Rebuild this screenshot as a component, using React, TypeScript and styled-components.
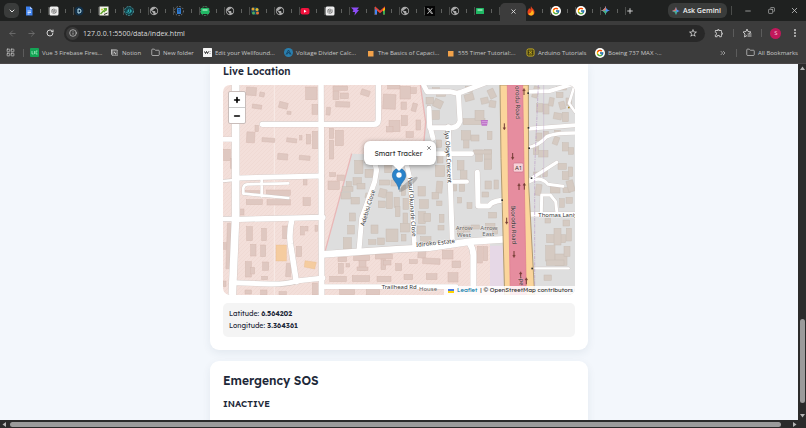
import React from "react";
import styled, { createGlobalStyle, css } from "styled-components";
import { FcGoogle } from "react-icons/fc";
import { MdPublic, MdStarBorder, MdOutlineExtension } from "react-icons/md";
import { AiOutlineOpenAI } from "react-icons/ai";
import { FaXTwitter } from "react-icons/fa6";
import { RiNotionFill } from "react-icons/ri";
import {
  ArrowLeft,
  ArrowRight,
  ChevronDown,
  ChevronsRight,
  Copy,
  EllipsisVertical,
  Folder,
  Info,
  LayoutGrid,
  Minus,
  Plus,
  RotateCw,
  X,
} from "lucide-react";

const chromeFont = `"Open Sans", "Noto Sans", sans-serif`;
const pageFont = `Lexend, Inter, "Open Sans", sans-serif`;

const GlobalStyle = createGlobalStyle`
  * { box-sizing: border-box; }
  body { margin: 0; overflow: hidden; background: #f3f7fc; font-family: ${pageFont}; }
  button { border: 0; padding: 0; background: none; color: inherit; font: inherit; }
  a { color: inherit; text-decoration: none; }
  h2, p { margin: 0; }
  svg { display: block; flex: none; }
`;

const Browser = styled.div`
  display: flex;
  flex-direction: column;
  height: 100vh;
  background: #3c3c3c;
  color: #c7c7c7;
  font-family: ${chromeFont};
`;

const center = css`
  display: flex;
  align-items: center;
  justify-content: center;
`;

const TabStrip = styled.div`
  display: flex;
  align-items: center;
  height: 21px;
  flex: none;
  background: #1f2120;
`;

const TabSearch = styled.button`
  ${center}
  width: 15px;
  height: 15px;
  margin: 0 5px 0 4px;
  border-radius: 5px;
  background: #3a3c3b;
  color: #e3e3e3;
`;

const Tabs = styled.div`
  display: flex;
  flex: 1;
  height: 100%;
  align-items: flex-end;
`;

const Tab = styled.button<{ $active?: boolean }>`
  display: flex;
  align-items: center;
  justify-content: ${(p) => (p.$active ? "center" : "space-between")};
  flex: 1 1 0;
  min-width: 0;
  height: ${(p) => (p.$active ? 18 : 21)}px;
  padding-bottom: ${(p) => (p.$active ? 1 : 0)}px;
  border-radius: 5px 5px 0 0;
  background: ${(p) => (p.$active ? "#3c3c3c" : "transparent")};
  color: #e3e3e3;
`;

const TabEdge = styled.span`
  display: flex;
  align-items: center;
  gap: 7px;
  height: 8px;
  &::before { content: ""; width: 1px; height: 4px; background: #5f615f; }
  &::after { content: ""; width: 1px; height: 8px; background: #4b4d4b; }
`;

const WindowTools = styled.div`
  display: flex;
  align-items: center;
  width: 180px;
  color: #d0d0d0;
`;

const NewTab = styled.button`
  ${center}
  width: 8px;
  height: 12px;
`;

const Gemini = styled.button`
  display: flex;
  align-items: center;
  gap: 3px;
  height: 15px;
  margin-left: 34px;
  padding: 0 6px 0 4px;
  border-radius: 6px;
  background: #3a3c3b;
  color: #f1f1f1;
  font-size: 7px;
  font-weight: 600;
  white-space: nowrap;
`;

const WindowButtons = styled.div`
  display: flex;
  flex: 1;
  justify-content: space-between;
  margin-left: 4px;
  padding: 0 7px 0 12px;
  border-left: 1px solid #4b4d4b;
`;

const Toolbar = styled.div`
  display: flex;
  align-items: center;
  flex: none;
  height: 24px;
  padding-right: 6px;
`;

const NavButtons = styled.div`
  display: flex;
  gap: 11px;
  width: 64px;
  padding-left: 8px;
`;

const NavButton = styled.button<{ $dim?: boolean }>`
  ${center}
  width: 8px;
  height: 12px;
  color: ${(p) => (p.$dim ? "#777" : "#d5d5d5")};
`;

const AddressBar = styled.label`
  display: flex;
  align-items: center;
  flex: 1;
  height: 17px;
  padding: 0 7px 0 2px;
  border-radius: 9px;
  background: #282828;
  color: #d5d5d5;
`;

const SiteInfo = styled.span`
  ${center}
  width: 13px;
  height: 13px;
  border-radius: 50%;
  background: #3c3c3c;
`;

const AddressInput = styled.input`
  flex: 1;
  min-width: 0;
  margin-left: 4px;
  padding: 0;
  border: 0;
  outline: 0;
  background: none;
  color: #dcdcdc;
  font: 7px ${chromeFont};
`;

const ToolGroup = styled.div`
  display: flex;
  align-items: center;
  justify-content: space-between;
  width: 95px;
  padding-left: 9px;
`;

const Divider = styled.span`
  width: 1px;
  height: 8px;
  background: #5c5c5c;
`;

const Avatar = styled.button`
  ${center}
  width: 11px;
  height: 11px;
  border-radius: 50%;
  background: #c2185b;
  color: #f6c6da;
  font-size: 6px;
`;

const Bookmarks = styled.nav`
  display: flex;
  align-items: center;
  flex: none;
  height: 19px;
  padding: 0 7px 3px 6px;
  border-bottom: 1px solid #4b4849;
  font-size: 6px;
  white-space: nowrap;
`;

const Bookmark = styled.a<{ $width: number }>`
  display: flex;
  align-items: center;
  gap: 3px;
  flex: 0 0 ${(p) => p.$width}px;
`;

const BookmarkEnd = styled.div`
  display: flex;
  align-items: center;
  gap: 9px;
  margin-left: auto;
`;

const BookmarkStart = styled.div`
  display: flex;
  align-items: center;
  gap: 8px;
  width: 24px;
`;

const Body = styled.div`
  display: flex;
  flex: 1;
  min-height: 0;
`;

const Page = styled.main`
  flex: 1;
  min-width: 0;
  overflow: hidden;
  background: #f3f7fc;
  color: #1e2939;
  font-family: ${pageFont};
`;

const Column = styled.div`
  display: flex;
  flex-direction: column;
  gap: 11px;
  max-width: 378px;
  margin: 0 auto;
`;

const Card = styled.section<{ $continued?: boolean }>`
  padding: ${(p) => (p.$continued ? "0 13px 13px" : "12px 13px 26px")};
  border-radius: ${(p) => (p.$continued ? "0 0 9px 9px" : "9px")};
  background: #fff;
  box-shadow: 0 3px 9px rgba(40, 60, 90, 0.08);
`;

const MapTitle = styled.h2`
  padding: 1px 0 6px;
  font-size: 10px;
  line-height: 14px;
  font-weight: 600;
`;

const MapFrame = styled.div`
  position: relative;
  aspect-ratio: 352 / 210;
  overflow: hidden;
  border-radius: 7px;
`;

const MapDrawing = styled.svg`
  width: 100%;
  height: 100%;
  font-family: "Noto Sans", sans-serif;
`;

const ZoomControl = styled.div`
  position: absolute;
  top: 6px;
  left: 5px;
  width: 18px;
  border: 1px solid #c9bdba;
  border-radius: 2px;
  background: #fff;
  color: #000;
`;

const ZoomButton = styled.button`
  ${center}
  width: 100%;
  height: 15px;
  & + & { border-top: 1px solid #ccc; height: 16px; }
`;

const Popup = styled.div`
  ${center}
  position: absolute;
  left: 50%;
  top: 56px;
  width: 72px;
  height: 24px;
  margin-left: -35px;
  padding-right: 3px;
  border-radius: 6px;
  background: #fff;
  box-shadow: 0 1px 5px rgba(0, 0, 0, 0.4);
  color: #333;
  font-size: 7px;
  white-space: nowrap;
  &::after {
    content: "";
    position: absolute;
    top: 100%;
    left: 50%;
    margin-left: -7px;
    border: 6px solid transparent;
    border-top-color: #fff;
    border-bottom: 0;
  }
`;

const PopupClose = styled.button`
  position: absolute;
  top: 4px;
  right: 4px;
  color: #666;
`;

const Attribution = styled.div`
  position: absolute;
  right: 0;
  bottom: 0;
  display: flex;
  align-items: center;
  gap: 3px;
  padding: 0 2px 0 4px;
  background: rgba(255, 255, 255, 0.85);
  color: #333;
  font-size: 6px;
  line-height: 9px;
  white-space: nowrap;
`;

const Credit = styled.a`
  color: #0078a8;
`;

const Coordinates = styled.div`
  margin-top: 8px;
  padding: 5px 6px;
  border-radius: 5px;
  background: #f4f4f4;
  font-size: 7px;
  line-height: 12px;
`;

const SosTitle = styled.h2`
  padding-bottom: 8px;
  font-size: 12px;
  line-height: 16px;
  font-weight: 600;
`;

const SosState = styled.p`
  font-size: 9px;
  line-height: 14px;
  font-weight: 600;
`;

const VerticalBar = styled.div`
  display: flex;
  flex-direction: column;
  align-items: center;
  justify-content: space-between;
  width: 8px;
  padding: 2px 0;
  background: #2b2b2b;
`;

const VerticalThumb = styled.div`
  width: 5px;
  height: 24%;
  margin-top: auto;
  margin-bottom: 10px;
  border-radius: 3px;
  background: #9b9b9b;
`;

const HorizontalBar = styled.div`
  display: flex;
  align-items: center;
  gap: 3px;
  flex: none;
  height: 8px;
  padding: 0 9px 0 2px;
  background: #2b2b2b;
`;

const HorizontalThumb = styled.div`
  flex: 1;
  height: 5px;
  margin-right: 8px;
  border-radius: 3px;
  background: #9b9b9b;
`;

function GeminiMark({ size = 8 }: { size?: number }) {
  return (
    <svg width={size} height={size} viewBox="0 0 16 16">
      <path d="M8 0Q9 7 8 8Q7 9 0 8Q7 7 8 0Z" fill="#e8564a" />
      <path d="M8 0Q9 7 16 8Q9 9 8 16Q7 9 0 8Q7 7 8 0Z" fill="#4b93f5" />
      <path d="M8 0Q7 7 0 8L6 9 9 6Z" fill="#db7c63" />
      <path d="M0 8Q7 9 8 16L10 9Z" fill="#47b97a" />
    </svg>
  );
}

function TabIcon({ kind }: { kind: string }) {
  switch (kind) {
    case "globe":
      return <MdPublic size={10} color="#aaa" />;
    case "google":
      return (
        <svg width="10" height="10" viewBox="0 0 20 20">
          <circle cx="10" cy="10" r="10" fill="#fff" />
          <FcGoogle size={16} x={2} y={2} />
        </svg>
      );
    case "openai":
      return (
        <svg width="10" height="10" viewBox="0 0 20 20">
          <rect x="1" y="1" width="18" height="18" rx="3" fill="#eee" />
          <AiOutlineOpenAI size={14} x={3} y={3} color="#555" />
        </svg>
      );
    case "x":
      return (
        <svg width="10" height="10" viewBox="0 0 20 20">
          <rect width="20" height="20" fill="#050505" />
          <FaXTwitter size={14} x={3} y={3} color="#ddd" />
        </svg>
      );
    case "gemini":
      return <GeminiMark size={9} />;
    default:
      return (
        <svg width="10" height="10" viewBox="0 0 20 20">
          {kind === "docs" && (
            <>
              <path d="M4 1h8l5 5v13H4Z" fill="#3f83f1" />
              <path d="M12 1l5 5h-5Z" fill="#a7c8ff" />
              <path d="M7 10h7M7 13h7M7 16h4" stroke="#fff" strokeWidth="1.5" />
            </>
          )}
          {kind === "dev" && (
            <>
              <circle cx="10" cy="10" r="9" fill="#123049" />
              <path d="M8 6h2a4 4 0 0 1 0 8H8Z" fill="none" stroke="#bfe7f5" strokeWidth="2" />
            </>
          )}
          {kind === "chart" && (
            <>
              <rect x="1" y="1" width="18" height="18" fill="#f4f4ea" />
              <path d="M9 4h7v5l-5 2Z" fill="#65a82f" />
              <path d="M3 16L9 10l3 2" stroke="#65a82f" strokeWidth="3" fill="none" />
              <path d="M10 17l7-3" stroke="#333" strokeWidth="2" />
              <circle cx="6" cy="7" r="2" fill="#c5cf38" />
            </>
          )}
          {kind === "teal" && (
            <>
              <circle cx="10" cy="10" r="9" fill="#12414a" stroke="#4a9298" strokeWidth="2" strokeDasharray="4 2" />
              <path d="M4 13L11 4l5 6-5 6Z" fill="#30a6ac" />
              <path d="M4 10l8 5M11 4v8" stroke="#14545d" strokeWidth="2" />
            </>
          )}
          {kind === "book" && (
            <>
              <circle cx="10" cy="10" r="9" fill="none" stroke="#7b8188" strokeWidth="2" strokeDasharray="3 3" />
              <rect x="6" y="4" width="8" height="12" rx="1" fill="#2f7bd0" />
              <path d="M8 7h4M8 10h4" stroke="#153d70" strokeWidth="1.5" />
            </>
          )}
          {kind === "sheet-ring" && (
            <circle cx="10" cy="10" r="9" fill="none" stroke="#4c8b65" strokeWidth="2" strokeDasharray="4 2" />
          )}
          {(kind === "sheet" || kind === "sheet-ring") && (
            <>
              <rect x="2" y="4" width="16" height="12" rx="1" fill="#20b864" />
              <path d="M5 8h10" stroke="#d8ffe6" strokeWidth="2" />
            </>
          )}
          {kind === "nodes" && (
            <>
              <circle cx="10" cy="10" r="8" fill="#15455b" />
              <circle cx="6" cy="6" r="3" fill="#e5a22c" />
              <circle cx="14" cy="7" r="3" fill="#e5bc2c" />
              <circle cx="7" cy="14" r="3" fill="#52a956" />
              <circle cx="15" cy="14" r="3" fill="#e47733" />
            </>
          )}
          {kind === "youtube" && (
            <>
              <rect x="1" y="4" width="18" height="13" rx="4" fill="#f0123d" />
              <path d="M8 7.500l5 3-5 3Z" fill="#fff" />
            </>
          )}
          {kind === "vite" && <path d="M2 3h16l-4 5h4L9 19l1-7H5l2-4Z" fill="#8d4cf5" />}
          {kind === "mail" && (
            <>
              <path d="M2 17V5l8 7 8-7v12" fill="none" stroke="#e94235" strokeWidth="4" />
              <path d="M2 7v10" stroke="#4285f4" strokeWidth="4" />
              <path d="M18 7v10" stroke="#34a853" strokeWidth="4" />
              <path d="M16 6l4-3v5l-4 3Z" fill="#fbbc04" />
            </>
          )}
          {kind === "flame" && (
            <>
              <path d="M10 0c1 5 7 6 7 12a7 7 0 0 1-14 0c0-4 3-5 3-8l3 3Z" fill="#e6421c" />
              <path d="M12 7c0 3 5 4 3 9-3 5-10 3-10-1 3 1 6-2 7-8Z" fill="#ffb51d" />
            </>
          )}
        </svg>
      );
  }
}

const tabs = [
  "docs", "openai", "dev", "chart", "teal", "globe", "book", "sheet-ring",
  "globe", "nodes", "globe", "youtube", "openai", "vite", "mail", "globe",
  "x", "globe", "sheet", "active", "flame", "google", "google", "gemini",
];

function BookmarkIcon({ kind }: { kind: string }) {
  if (kind === "notion") return <RiNotionFill size={9} color="#ccc" />;
  if (kind === "folder") return <Folder size={9} />;
  if (kind === "google") return <TabIcon kind="google" />;
  return (
    <svg width="9" height="9" viewBox="0 0 18 18">
      {kind === "vue" && (
        <>
          <rect width="18" height="18" rx="2" fill="#14a455" />
          <path d="M4 6v6h3M9 6v6M12 6v6h3M12 6h3" stroke="#a7edc3" strokeWidth="1.500" fill="none" />
        </>
      )}
      {kind === "well" && (
        <>
          <rect width="18" height="18" rx="1" fill="#f5f5f5" />
          <path d="M3 7l2 4 2-4 2 4 2-4M14 7v1M14 11v1" stroke="#222" strokeWidth="2" fill="none" />
        </>
      )}
      {kind === "volt" && (
        <>
          <circle cx="9" cy="9" r="9" fill="#2a7fae" />
          <path d="M4 13L9 4l5 9M6 13l3-5 3 5" stroke="#123a58" strokeWidth="1.500" fill="none" />
        </>
      )}
      {kind === "orange" && <rect x="4" y="6" width="11" height="11" fill="#f2a24a" />}
      {kind === "arduino" && (
        <>
          <rect x="2" y="2" width="14" height="14" rx="3" fill="#35310f" stroke="#cfb522" strokeWidth="2" />
          <path d="M5 6h8M5 12h8M6 7l6 4M12 7l-6 4" stroke="#cfb522" strokeWidth="1.500" />
        </>
      )}
    </svg>
  );
}

const bookmarks = [
  { kind: "vue", label: "Vue 3 Firebase Fires...", width: 80 },
  { kind: "notion", label: "Notion", width: 41 },
  { kind: "folder", label: "New folder", width: 52 },
  { kind: "well", label: "Edit your Wellfound...", width: 81 },
  { kind: "volt", label: "Voltage Divider Calc...", width: 82 },
  { kind: "orange", label: "The Basics of Capaci...", width: 80 },
  { kind: "orange", label: "555 Timer Tutorial:...", width: 80 },
  { kind: "arduino", label: "Arduino Tutorials", width: 69 },
  { kind: "google", label: "Boeing 737 MAX -...", width: 80 },
];

// Map units are thirds of a pixel. Each building is [x, y, width, height, angle].
type Building = [number, number, number, number, number?];

const pinkBuildings: Building[] = [
  [70, 7, 30, 24, 4], [110, 22, 14, 13, 12], [88, 59, 28, 12, 8], [168, 52, 26, 18, 14],
  [192, 79, 12, 9, 5], [248, 6, 34, 38], [267, 58, 18, 30], [330, 3, 44, 13], [330, 18, 18, 26],
  [352, 24, 24, 17], [338, 50, 42, 16, 2], [310, 67, 12, 23, 5], [414, 15, 26, 17, 18],
  [480, 28, 38, 44, 3], [494, 0, 37, 12], [498, 106, 33, 34], [490, 125, 20, 16],
  [71, 141, 24, 32, 3], [96, 121, 10, 19], [117, 159, 38, 12, 4], [191, 160, 30, 12, 7],
  [230, 152, 7, 13], [250, 148, 13, 29], [268, 139, 18, 52], [337, 136, 24, 46], [319, 130, 13, 30],
  [319, 166, 13, 56], [164, 206, 30, 18, 5], [229, 212, 32, 13, 5], [320, 263, 18, 12], [342, 270, 22, 16],
  [2, 193, 20, 34], [22, 220, 7, 30], [68, 317, 46, 14], [130, 315, 72, 16],
  [70, 344, 48, 15], [132, 344, 70, 16], [240, 338, 22, 24], [53, 372, 10, 18], [315, 288, 34, 26],
  [241, 278, 11, 22], [71, 425, 17, 42], [116, 430, 14, 37], [179, 423, 16, 38], [83, 478, 16, 35],
  [113, 480, 15, 35], [67, 530, 18, 46], [83, 547, 12, 20], [119, 531, 18, 25], [116, 574, 18, 10],
  [189, 535, 15, 40, 4], [220, 484, 16, 31], [232, 424, 12, 26], [248, 424, 7, 14], [276, 421, 8, 18],
  [2, 473, 8, 20], [11, 415, 12, 136, 2], [1, 588, 8, 17], [66, 615, 19, 12], [113, 615, 19, 15],
  [268, 594, 15, 36], [168, 620, 22, 10], [320, 574, 50, 16], [388, 572, 52, 18], [462, 574, 42, 16],
  [345, 516, 26, 14], [346, 535, 15, 30], [369, 536, 11, 10], [392, 511, 48, 16], [408, 526, 21, 31],
  [402, 546, 33, 11], [457, 507, 51, 15], [474, 522, 14, 32], [482, 526, 22, 14], [518, 536, 18, 21],
  [585, 496, 23, 23, 5], [559, 524, 24, 12], [599, 520, 52, 17, 3], [658, 496, 32, 26], [687, 528, 26, 20],
  [763, 484, 15, 50], [781, 485, 13, 42], [675, 563, 30, 28], [610, 566, 32, 18], [543, 568, 26, 16],
  [350, 614, 45, 15], [430, 614, 40, 16], [531, 4, 31, 38], [534, 51, 16, 22], [567, 55, 14, 24, 15],
  [535, 92, 18, 30], [579, 105, 14, 30], [563, 8, 17, 18], [549, 140, 22, 17],
];

const grayBuildings: Building[] = [
  [395, 226, 25, 40], [425, 210, 25, 22], [426, 253, 24, 24], [370, 290, 15, 24], [390, 278, 25, 22],
  [358, 305, 32, 14], [354, 323, 28, 19], [384, 337, 25, 20], [402, 295, 24, 17], [379, 384, 18, 24],
  [374, 421, 20, 26], [361, 458, 24, 34], [427, 326, 24, 14, 12], [468, 312, 22, 25, 14], [466, 348, 21, 20],
  [490, 321, 18, 50], [513, 337, 16, 30], [444, 420, 21, 25], [489, 432, 36, 38], [437, 464, 22, 14],
  [464, 459, 20, 20], [517, 365, 14, 30], [470, 285, 30, 15], [504, 285, 28, 18], [485, 230, 20, 33],
  [535, 301, 12, 30], [540, 340, 16, 33], [540, 384, 14, 34], [532, 415, 28, 26], [535, 448, 14, 20],
  [585, 305, 22, 28], [590, 344, 26, 26], [587, 380, 20, 36], [603, 385, 20, 25], [583, 423, 24, 24],
  [593, 455, 31, 20], [640, 289, 18, 35, 5], [627, 322, 20, 20], [641, 348, 16, 14], [649, 388, 14, 24],
  [645, 421, 18, 14], [637, 241, 28, 34], [643, 206, 17, 28], [640, 165, 16, 22], [609, 37, 23, 20],
  [632, 44, 26, 24, 25], [629, 8, 20, 15], [640, 22, 28, 12], [621, 77, 28, 26], [613, 60, 9, 16],
  [727, 4, 21, 18], [725, 27, 27, 20, -15], [774, 38, 22, 18, -12], [797, 12, 19, 28, -25], [799, 47, 19, 20, 8],
  [720, 101, 66, 18], [756, 76, 27, 30], [715, 137, 28, 28], [722, 167, 16, 22], [744, 150, 24, 18],
  [793, 139, 14, 25], [758, 195, 20, 34], [784, 194, 22, 28], [784, 223, 22, 30], [751, 195, 55, 12],
  [703, 227, 20, 28], [712, 257, 20, 25], [686, 299, 15, 19], [709, 297, 16, 22], [704, 337, 12, 17],
  [732, 353, 15, 18], [786, 288, 19, 24], [813, 285, 13, 27], [777, 321, 20, 15], [797, 382, 24, 17],
  [703, 426, 18, 20], [721, 423, 20, 18], [744, 420, 25, 12], [788, 415, 28, 20], [809, 427, 15, 20],
  [930, 4, 16, 34, 15], [940, 56, 19, 25], [960, 57, 18, 30], [978, 38, 14, 25, 10], [1000, 22, 20, 16],
  [1009, 50, 17, 22, -15], [992, 84, 24, 19, 10], [1018, 82, 18, 28], [1029, 39, 16, 22], [1000, 5, 30, 10],
  [939, 144, 18, 24], [961, 139, 15, 20], [995, 136, 18, 14], [931, 181, 16, 28], [947, 196, 28, 20],
  [991, 155, 16, 24, 20], [1018, 173, 18, 25], [1036, 188, 16, 20], [932, 261, 20, 20], [959, 250, 14, 25],
  [1005, 235, 25, 18], [1018, 260, 20, 24], [1036, 246, 13, 28], [938, 298, 17, 33, 8], [982, 304, 29, 20],
  [1020, 308, 22, 15], [1033, 286, 20, 34, -15], [1010, 341, 14, 26], [1029, 337, 19, 18],
  [971, 449, 57, 24], [993, 430, 21, 50], [1030, 430, 15, 38], [968, 482, 28, 46], [996, 507, 36, 34],
  [1023, 484, 18, 30], [970, 525, 53, 16], [966, 400, 17, 14], [1020, 405, 20, 18], [963, 570, 22, 16],
];

const roads: [string, number][] = [
  ["M38 0V390L28 630", 23], ["M0 163H38", 14], ["M0 402H38", 14], ["M0 288L34 285", 8],
  ["M294 0L296 630", 17], ["M118 118H452Q466 118 466 104V0", 16], ["M45 279L296 273", 15],
  ["M116 277V334M196 295L73 298Q62 299 61 309V326L196 339", 8], ["M46 403L300 397", 16],
  ["M206 405Q198 445 202 475L220 590", 17], ["M36 593L140 597Q190 598 220 588L300 579", 15],
  ["M300 605H700", 14], ["M452 225L461 255 455 290 416 400 408 496", 15], ["M550 235L562 285 575 485", 14],
  ["M298 508L531 492 620 488 741 470 840 463", 20], ["M741 477Q750 490 751 510V605", 18],
  ["M602 0L612 20 680 20 705 25 789 -7M706 23L711 108Q706 126 688 128H620L618 70", 15],
  ["M676 125L680 240 688 470M622 128L630 160", 15], ["M638 206H746", 14],
  ["M682 290H732", 12], ["M763 262L765 363H798Q804 350 835 346", 15],
  ["M915 20L980 18 1056 -5", 12], ["M915 131L1056 121", 12], ["M915 188Q950 180 970 156Q990 144 1056 144", 10],
  ["M918 285L1001 232", 10], ["M915 292Q953 270 975 298L1020 304", 9],
  ["M955 385L956 330H982L998 350 1002 385", 9], ["M915 388H1056", 14], ["M930 550H1037", 7],
  ["M1055 0L1038 55 1056 80", 8],
];

function StreetMap() {
  const draw = (items: Building[], fill: string, stroke: string) => (
    <g fill={fill} stroke={stroke} strokeWidth="1.500">
      {items.map(([x, y, w, h, a], i) => (
        <rect key={i} x={x} y={y} width={w} height={h} transform={a ? `rotate(${a} ${x + w / 2} ${y + h / 2})` : undefined} />
      ))}
    </g>
  );
  return (
    <MapDrawing viewBox="0 0 1056 630" preserveAspectRatio="xMidYMid slice" role="img" aria-label="Street map">
      <defs>
        <pattern id="hatch" width="12" height="12" patternUnits="userSpaceOnUse">
          <path d="M-3 15L15 -3" stroke="#edd4ce" strokeWidth="1.500" />
        </pattern>
      </defs>
      <rect width="1056" height="630" fill="#f3dfda" />
      <rect width="1056" height="630" fill="url(#hatch)" />
      <path d="M154 0V630" stroke="#f8ebe7" strokeWidth="3" />
      <path d="M386 206L430 208 600 220 608 111 592 0H1056V630H801V470L620 488 306 506Z" fill="#dedede" />
      <path d="M386 206L306 500M592 0L608 111 600 200" fill="none" stroke="#e8b7b7" strokeWidth="4" />
      <path d="M801 482H842V630H801Z" fill="#e6d8e6" />
      {draw(pinkBuildings, "#dfc8c1", "#d5b9b1")}
      {draw(grayBuildings, "#d5cac2", "#c8bdb4")}
      <rect x="159" y="480" width="31" height="48" fill="#f5cc9f" stroke="#e6b786" />
      <path d="M246 527L280 532 275 552 244 546Z" fill="#f5cc9f" stroke="#e6b786" />
      <g fill="none" stroke="#cdc4c1" strokeLinejoin="round" strokeLinecap="round">
        {roads.map(([d, w]) => <path key={d} d={d} strokeWidth={w + 2} />)}
      </g>
      <g fill="none" stroke="#fff" strokeLinejoin="round" strokeLinecap="round">
        {roads.map(([d, w]) => <path key={d} d={d} strokeWidth={w} />)}
      </g>
      <path d="M831 0L834 220 845 630H935L917 300 916 0Z" fill="#fbd59b" stroke="#b19a72" strokeWidth="3" />
      <path d="M853 0L856 300 862 630H910L904 300 899 0Z" fill="#e68d9f" stroke="#dc7890" strokeWidth="2" />
      <g stroke="#b99bc5" fill="none" strokeWidth="2">
        <path d="M946 0L935 250V630" strokeDasharray="10 3 3 3" />
        <path d="M962 0V280" opacity="0.5" />
      </g>
      <g stroke="#743c35" fill="#743c35" strokeWidth="3">
        {[[844, 125, 1], [869, 214, 1], [903, 20, -1], [851, 408, 1], [873, 508, 1], [888, 305, -1], [904, 304, -1], [893, 570, -1], [910, 588, -1]].map(([x, y, s]) => (
          <g key={`${x}-${y}`} transform={`translate(${x} ${y}) scale(1 ${s})`}>
            <path d="M0 -10V5" /><path d="M-4 3H4L0 10Z" strokeWidth="1" />
          </g>
        ))}
      </g>
      <path d="M773 105H795L792 122H776Z" fill="#bd72c8" />
      <path d="M776 110H794M777 116H793" stroke="#e1b5e7" strokeWidth="2" />
      <g fill="#333">
        {[[916, 25], [917, 129], [919, 190], [926, 280], [838, 346], [680, 288], [928, 551]].map(([x, y]) => (
          <rect key={`${x}-${y}`} x={x - 3} y={y - 3} width="5" height="5" />
        ))}
      </g>
      <rect x="1035" y="65" width="5" height="5" fill="#a8842c" />
      <rect x="871" y="234" width="30" height="27" rx="4" fill="#f7d2d8" stroke="#cf7188" strokeWidth="2" />
      <g fontSize="18" fill="#333" stroke="#fff" strokeWidth="3" strokeOpacity="0.7" paintOrder="stroke">
        <text x="876" y="254" stroke="none">A1</text>
        <text transform="translate(424 424) rotate(-73)">Adebisi Close</text>
        <text transform="translate(555 276) rotate(86)">Yusuf Okunade Close</text>
        <text transform="translate(666 138) rotate(87)">Iya Oloye Crescent</text>
        <text transform="translate(580 486) rotate(-6)">Idiroko Estate</text>
        <text x="476" y="611">Trailhead Rd</text>
        <text x="946" y="397">Thomas Laniy</text>
        <g strokeOpacity="0.2">
          <text transform="translate(877 3) rotate(89)">orodu Road</text>
          <text transform="translate(864 363) rotate(88)">Ikorodu Road</text>
          <text transform="translate(889 575) rotate(88)">-pe</text>
        </g>
        <g fill="#666" strokeOpacity="0.4">
          <text x="698" y="436">Arrow</text><text x="702" y="456">West</text>
          <text x="772" y="434">Arrow</text><text x="778" y="454">East</text>
          <text x="588" y="617">House</text>
        </g>
      </g>
      <ellipse cx="556" cy="298" rx="35" ry="8" fill="#555" opacity="0.3" transform="rotate(-38 556 298)" />
      <path d="M528 314C524 292 508 287 508 270A20 20 0 0 1 548 270C548 287 532 292 528 314Z" fill="#2b83ca" stroke="#2370ae" strokeWidth="2" />
      <circle cx="528" cy="270" r="8" fill="#fff" />
    </MapDrawing>
  );
}

function Arrow({ d }: { d: string }) {
  return <svg width="5" height="5" viewBox="0 0 10 10"><path d={d} fill="#b5b5b5" /></svg>;
}

export default function App() {
  return (
    <Browser>
      <GlobalStyle />
      <TabStrip>
        <TabSearch aria-label="Search tabs"><ChevronDown size={8} strokeWidth={3} /></TabSearch>
        <Tabs role="tablist">
          {tabs.map((kind, i) => kind === "active" ? (
            <Tab key={i} role="tab" aria-selected $active aria-label="Current tab"><X size={7} strokeWidth={3} /></Tab>
          ) : (
            <Tab key={i} role="tab" aria-label={kind}><TabIcon kind={kind} /><TabEdge /></Tab>
          ))}
        </Tabs>
        <WindowTools>
          <NewTab aria-label="New tab"><Plus size={8} strokeWidth={3} /></NewTab>
          <Gemini><GeminiMark />Ask Gemini</Gemini>
          <WindowButtons>
            <button aria-label="Minimize"><Minus size={8} /></button>
            <button aria-label="Restore"><Copy size={7} transform="scale(-1 1)" /></button>
            <button aria-label="Close"><X size={9} /></button>
          </WindowButtons>
        </WindowTools>
      </TabStrip>
      <Toolbar>
        <NavButtons>
          <NavButton $dim aria-label="Back"><ArrowLeft size={9} /></NavButton>
          <NavButton $dim aria-label="Forward"><ArrowRight size={9} /></NavButton>
          <NavButton aria-label="Reload"><RotateCw size={8} strokeWidth={3} /></NavButton>
        </NavButtons>
        <AddressBar>
          <SiteInfo><Info size={8} /></SiteInfo>
          <AddressInput aria-label="Address" defaultValue="127.0.0.1:5500/data/index.html" />
          <MdStarBorder size={10} />
        </AddressBar>
        <ToolGroup>
          <button aria-label="Extensions"><MdOutlineExtension size={10} /></button>
          <Divider />
          <button aria-label="Favorites">
            <svg width="10" height="10" viewBox="0 0 20 20" fill="none" stroke="currentColor" strokeWidth="2">
              <path d="M10 2l2 5 6 1-4 3M10 2L8 7 2 8l4 4-1 6 5-3M11 12h8M11 16h8" />
            </svg>
          </button>
          <Divider />
          <Avatar>S</Avatar>
          <button aria-label="Menu"><EllipsisVertical size={10} strokeWidth={3} /></button>
        </ToolGroup>
      </Toolbar>
      <Bookmarks>
        <BookmarkStart><LayoutGrid size={9} /><Divider /></BookmarkStart>
        {bookmarks.map((b) => (
          <Bookmark key={b.label} href="#" $width={b.width}><BookmarkIcon kind={b.kind} />{b.label}</Bookmark>
        ))}
        <BookmarkEnd>
          <button aria-label="More bookmarks"><ChevronsRight size={8} /></button>
          <Divider />
          <Bookmark href="#" $width={53}><BookmarkIcon kind="folder" />All Bookmarks</Bookmark>
        </BookmarkEnd>
      </Bookmarks>
      <Body>
        <Page>
          <Column>
            <Card $continued>
              <MapTitle>Live Location</MapTitle>
              <MapFrame>
                <StreetMap />
                <ZoomControl>
                  <ZoomButton aria-label="Zoom in"><Plus size={8} strokeWidth={5} /></ZoomButton>
                  <ZoomButton aria-label="Zoom out"><Minus size={8} strokeWidth={5} /></ZoomButton>
                </ZoomControl>
                <Popup>Smart Tracker<PopupClose aria-label="Close popup"><X size={6} strokeWidth={3} /></PopupClose></Popup>
                <Attribution>
                  <svg width="6" height="4" viewBox="0 0 12 8"><path d="M0 0h12v4H0Z" fill="#4c7be1" /><path d="M0 4h12v4H0Z" fill="#ffd500" /></svg>
                  <Credit href="#">Leaflet</Credit> | © OpenStreetMap contributors
                </Attribution>
              </MapFrame>
              <Coordinates>
                <p>Latitude: <strong>6.564202</strong></p>
                <p>Longitude: <strong>3.364361</strong></p>
              </Coordinates>
            </Card>
            <Card>
              <SosTitle>Emergency SOS</SosTitle>
              <SosState>INACTIVE</SosState>
            </Card>
          </Column>
        </Page>
        <VerticalBar>
          <Arrow d="M5 1l5 7H0Z" />
          <VerticalThumb />
          <Arrow d="M5 9L0 2h10Z" />
        </VerticalBar>
      </Body>
      <HorizontalBar>
        <Arrow d="M1 5l7-5v10Z" />
        <HorizontalThumb />
        <Arrow d="M9 5L2 0v10Z" />
      </HorizontalBar>
    </Browser>
  );
}
